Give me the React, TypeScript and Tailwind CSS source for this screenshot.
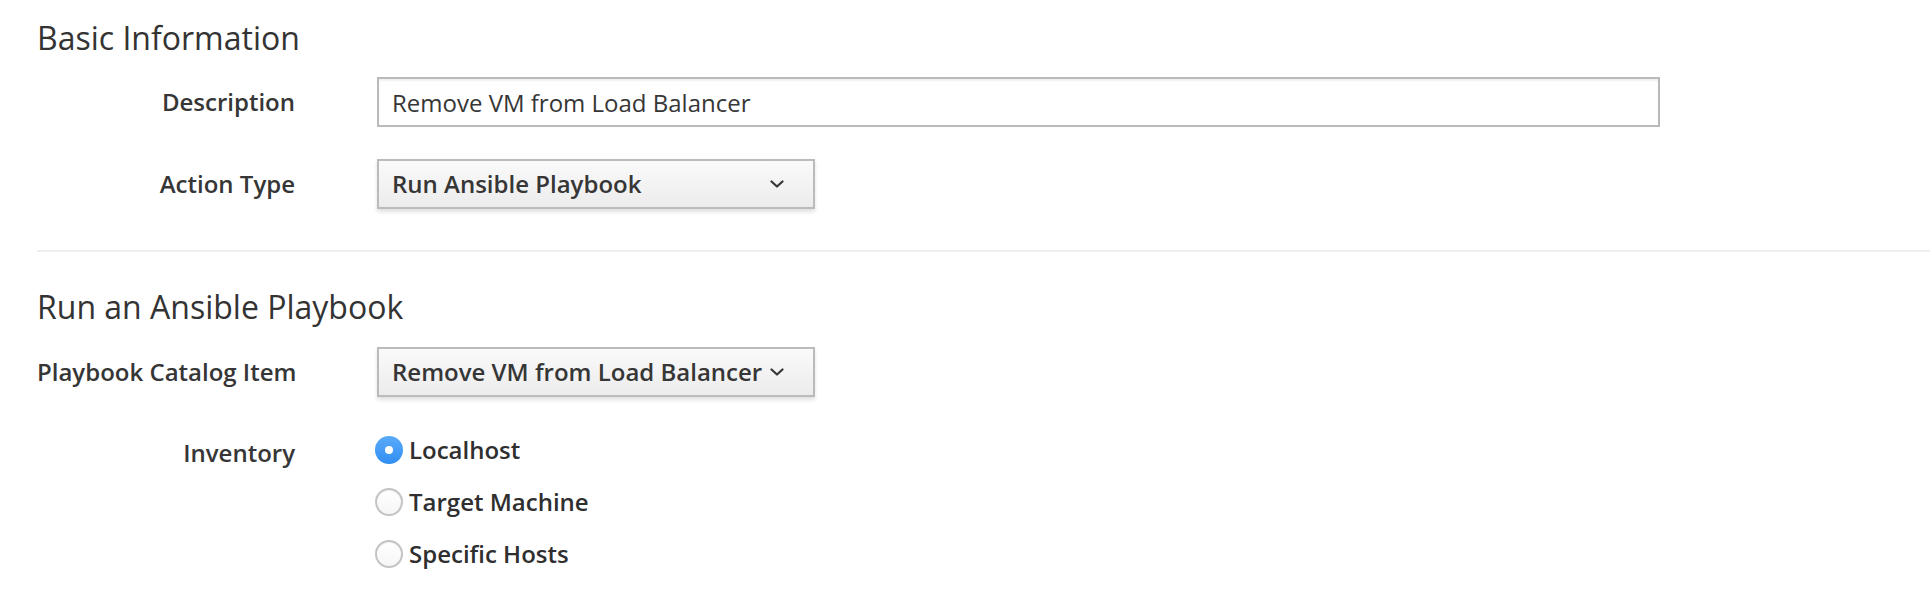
import { useState } from 'react'

const FONT = "font-['Open_Sans',_'Liberation_Sans',_sans-serif]"

function Chevron() {
  return (
    <svg width="14" height="8" viewBox="0 0 14 8" fill="none" className="shrink-0">
      <path d="M1.5 1.5 L7 6.5 L12.5 1.5" stroke="#363636" strokeWidth="2.2" strokeLinecap="round" strokeLinejoin="round" />
    </svg>
  )
}

function SelectBox({ value }: { value: string }) {
  return (
    <button
      type="button"
      className="flex h-[50px] w-[438px] items-center justify-between border-2 border-[#bbbbbb] bg-gradient-to-b from-[#fafafa] to-[#ececec] pl-[13px] pr-[29px] text-[24px] font-semibold text-[#363636] shadow-[0_3px_4px_rgba(0,0,0,0.12)]"
    >
      <span className="whitespace-nowrap">{value}</span>
      <Chevron />
    </button>
  )
}

function Row({ label, children }: { label: string; children: React.ReactNode }) {
  return (
    <div className="flex items-center">
      <div className="w-[258px] shrink-0 whitespace-nowrap text-right text-[24px] font-semibold text-[#363636]">{label}</div>
      <div className="ml-[82px]">{children}</div>
    </div>
  )
}

function Radio({ checked, label, onSelect }: { checked: boolean; label: string; onSelect: () => void }) {
  return (
    <label className="flex h-[52px] cursor-pointer items-center gap-[6px]" onClick={onSelect}>
      {checked ? (
        <span className="flex h-[28px] w-[28px] items-center justify-center rounded-full bg-gradient-to-b from-[#5aaaf9] to-[#2f8ef2]">
          <span className="h-[8px] w-[8px] rounded-full bg-white" />
        </span>
      ) : (
        <span className="h-[28px] w-[28px] rounded-full border-2 border-[#c4c4c4] bg-gradient-to-b from-white to-[#f6f6f6] shadow-[inset_0_1px_1px_rgba(0,0,0,0.06)]" />
      )}
      <span className="whitespace-nowrap text-[24px] font-semibold text-[#2f2f2f]">{label}</span>
    </label>
  )
}

export default function App() {
  const [inventory, setInventory] = useState('Localhost')
  const [description, setDescription] = useState('Remove VM from Load Balancer')

  return (
    <div className={`${FONT} h-[610px] w-full overflow-hidden bg-white`}>
      {/* Basic Information */}
      <div className="pl-[37px] pt-[18px]">
        <h3 className="h-[40px] text-[32px] leading-[40px] font-normal text-[#333333]">Basic Information</h3>

        <div className="mt-[19px] flex flex-col gap-[32px]">
          <Row label="Description">
            <input
              value={description}
              onChange={e => setDescription(e.target.value)}
              className="h-[50px] w-[1283px] border-2 border-[#bababa] bg-white px-[13px] text-[24px] text-[#363636] shadow-[inset_0_2px_2px_rgba(0,0,0,0.06)] outline-none"
            />
          </Row>
          <Row label="Action Type">
            <SelectBox value="Run Ansible Playbook" />
          </Row>
        </div>
      </div>

      <div className="ml-[37px] mt-[41px] h-[2px] bg-[#eeeeee]" />

      {/* Run an Ansible Playbook */}
      <div className="pl-[37px] pt-[35px]">
        <h3 className="h-[40px] text-[32px] leading-[40px] font-normal text-[#333333]">Run an Ansible Playbook</h3>

        <div className="mt-[20px]">
          <Row label="Playbook Catalog Item">
            <SelectBox value="Remove VM from Load Balancer" />
          </Row>
        </div>

        <div className="mt-[27px] flex items-start">
          <div className="mt-[3px] flex h-[52px] w-[258px] shrink-0 items-center justify-end text-[24px] font-semibold text-[#363636]">
            Inventory
          </div>
          <div className="ml-[80px] flex flex-col">
            {['Localhost', 'Target Machine', 'Specific Hosts'].map(opt => (
              <Radio key={opt} label={opt} checked={inventory === opt} onSelect={() => setInventory(opt)} />
            ))}
          </div>
        </div>
      </div>
    </div>
  )
}
